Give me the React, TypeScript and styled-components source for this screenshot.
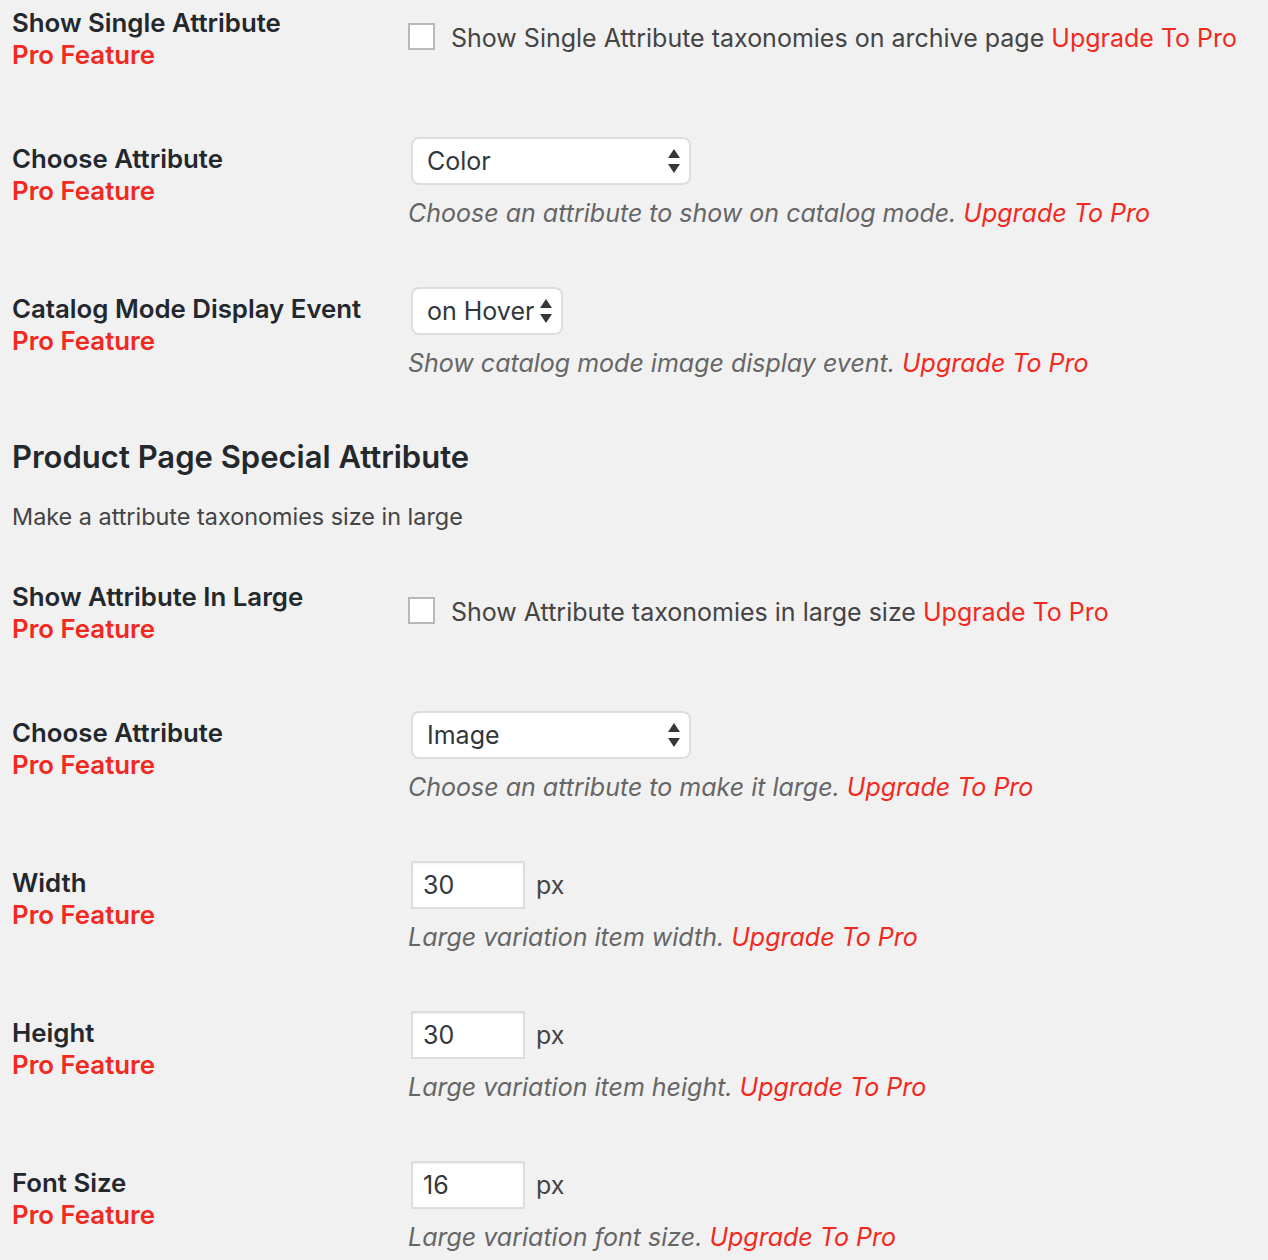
import React from "react";
import styled, { createGlobalStyle } from "styled-components";

const GlobalStyle = createGlobalStyle`
  html, body {
    margin: 0;
    padding: 0;
    background: #f1f1f1;
  }
  body {
    font-family: Inter, "Noto Sans", "Liberation Sans", sans-serif;
    color: #444;
  }
`;

const Page = styled.div`
  padding: 7px 0 0 12px;
  width: 1256px;
  min-height: 1253px;
`;

const Row = styled.div<{ $pb: number }>`
  display: flex;
  align-items: flex-start;
  padding-bottom: ${(p) => p.$pb}px;
`;

const Label = styled.div<{ $pt: number }>`
  width: 396px;
  flex: none;
  padding-top: ${(p) => p.$pt}px;
  font-size: 25.8px;
  line-height: 32px;
  font-weight: 600;
  color: #23282d;
`;

const Pro = styled.div`
  color: #f1291e;
  font-weight: 600;
`;

const Field = styled.div<{ $pt: number }>`
  flex: 1;
  padding-top: ${(p) => p.$pt}px;
  font-size: 25px;
  line-height: 32px;
  white-space: nowrap;
`;

const CheckLine = styled.label`
  display: flex;
  align-items: center;
  gap: 16px;
  color: #444;
`;

const Box = styled.span`
  width: 27px;
  height: 27px;
  margin-bottom: 3px;
  box-sizing: border-box;
  border: 2px solid #b4b9be;
  background: #fff;
  flex: none;
`;

const Upgrade = styled.span`
  color: #f1291e;
`;

const SelectBox = styled.div<{ $w?: number }>`
  margin-left: 3px;
  box-sizing: border-box;
  height: 48px;
  display: flex;
  width: ${(p) => (p.$w ? `${p.$w}px` : "max-content")};
  align-items: center;
  justify-content: space-between;
  gap: 5px;
  padding: 0 8px 0 14px;
  background: #fff;
  border: 2px solid #ddd;
  border-radius: 8px;
  color: #32373c;
  font-size: 25px;
`;

const Arrows = () => (
  <svg width="14" height="26" viewBox="0 0 14 26">
    <path d="M7 1 L13 10 L1 10 Z" fill="#32373c" />
    <path d="M7 25 L13 16 L1 16 Z" fill="#32373c" />
  </svg>
);

const Desc = styled.div`
  margin-top: 12px;
  font-style: italic;
  color: #666;
`;

const InputLine = styled.div`
  display: flex;
  align-items: center;
  gap: 11px;
  margin-left: 3px;
  color: #444;
`;

const NumberBox = styled.div`
  box-sizing: border-box;
  width: 114px;
  height: 48px;
  padding: 0 10px;
  display: flex;
  align-items: center;
  background: #fff;
  border: 2px solid #ddd;
  box-shadow: inset 0 1px 2px rgba(0, 0, 0, 0.07);
  color: #32373c;
  font-size: 25px;
`;

const Heading = styled.h2`
  margin: 0;
  font-size: 31px;
  line-height: 40px;
  font-weight: 600;
  color: #23282d;
`;

const SectionText = styled.p`
  margin: 24px 0 48px;
  font-size: 23.4px;
  line-height: 32px;
  color: #444;
`;

const LabelCell = ({ title }: { title: string }) => (
  <>
    <div>{title}</div>
    <Pro>Pro Feature</Pro>
  </>
);

const CheckRow = ({ title, text }: { title: string; text: string }) => (
  <Row $pb={66}>
    <Label $pt={0}>
      <LabelCell title={title} />
    </Label>
    <Field $pt={15}>
      <CheckLine>
        <Box />
        <span>
          {text} <Upgrade>Upgrade To Pro</Upgrade>
        </span>
      </CheckLine>
    </Field>
  </Row>
);

const SelectRow = ({
  title,
  value,
  width,
  desc,
}: {
  title: string;
  value: string;
  width?: number;
  desc: string;
}) => (
  <Row $pb={58}>
    <Label $pt={6}>
      <LabelCell title={title} />
    </Label>
    <Field $pt={0}>
      <SelectBox $w={width}>
        <span>{value}</span>
        <Arrows />
      </SelectBox>
      <Desc>
        {desc} <Upgrade>Upgrade To Pro</Upgrade>
      </Desc>
    </Field>
  </Row>
);

const SizeRow = ({ title, value, desc }: { title: string; value: string; desc: string }) => (
  <Row $pb={58}>
    <Label $pt={6}>
      <LabelCell title={title} />
    </Label>
    <Field $pt={0}>
      <InputLine>
        <NumberBox>{value}</NumberBox>
        <span>px</span>
      </InputLine>
      <Desc>
        {desc} <Upgrade>Upgrade To Pro</Upgrade>
      </Desc>
    </Field>
  </Row>
);

export default function App() {
  return (
    <Page>
      <GlobalStyle />
      <CheckRow
        title="Show Single Attribute"
        text="Show Single Attribute taxonomies on archive page"
      />
      <SelectRow
        title="Choose Attribute"
        value="Color"
        width={280}
        desc="Choose an attribute to show on catalog mode."
      />
      <SelectRow
        title="Catalog Mode Display Event"
        value="on Hover"
        desc="Show catalog mode image display event."
      />
      <Heading>Product Page Special Attribute</Heading>
      <SectionText>Make a attribute taxonomies size in large</SectionText>
      <CheckRow
        title="Show Attribute In Large"
        text="Show Attribute taxonomies in large size"
      />
      <SelectRow
        title="Choose Attribute"
        value="Image"
        width={280}
        desc="Choose an attribute to make it large."
      />
      <SizeRow title="Width" value="30" desc="Large variation item width." />
      <SizeRow title="Height" value="30" desc="Large variation item height." />
      <SizeRow title="Font Size" value="16" desc="Large variation font size." />
    </Page>
  );
}
